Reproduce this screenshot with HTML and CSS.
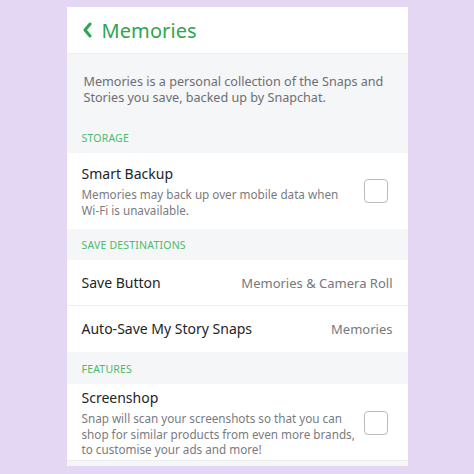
FILE: index.html
```html
<!DOCTYPE html>
<html>
<head>
<meta charset="utf-8">
<link rel="stylesheet" href="styles.css">
</head>
<body>
<div class="card">
  <div class="header">
    <svg class="back" width="10" height="16" viewBox="0 0 10 16"><path d="M8 2 L3 8 L8 14" fill="none" stroke="#2ea552" stroke-width="3" stroke-linecap="round" stroke-linejoin="round"/></svg>
    <span class="title">Memories</span>
  </div>
  <div class="intro">Memories is a personal collection of the Snaps and Stories you save, backed up by Snapchat.</div>
  <div class="section">STORAGE</div>
  <div class="row tall">
    <div class="text">
      <div class="label">Smart Backup</div>
      <div class="sub">Memories may back up over mobile data when <span class="nw">Wi-Fi</span> is unavailable.</div>
    </div>
    <div class="check"></div>
  </div>
  <div class="section s2">SAVE DESTINATIONS</div>
  <div class="row line">
    <div class="label">Save Button</div>
    <div class="value">Memories &amp; Camera Roll</div>
  </div>
  <div class="row">
    <div class="label">Auto-Save My Story Snaps</div>
    <div class="value">Memories</div>
  </div>
  <div class="section s3">FEATURES</div>
  <div class="row tall last">
    <div class="text">
      <div class="label">Screenshop</div>
      <div class="sub">Snap will scan your screenshots so that you can shop for similar products from even more brands, to customise your ads and more!</div>
    </div>
    <div class="check"></div>
  </div>
  <div class="foot"></div>
</div>
</body>
</html>
```
FILE: styles.css
```css
* { box-sizing: border-box; }
html, body { margin: 0; padding: 0; }
body {
  background: #e4d7f4;
  width: 474px;
  height: 474px;
  overflow: hidden;
  display: flex;
  justify-content: center;
  padding-top: 7px;
  font-family: "Noto Sans", "Open Sans", sans-serif;
}
.card {
  width: 341px;
  height: 459px;
  background: #f5f6f8;
  display: flex;
  flex-direction: column;
}
.header {
  height: 47px;
  flex: none;
  background: #fff;
  display: flex;
  align-items: center;
  padding-left: 15px;
  gap: 10px;
  border-bottom: 1px solid #eceef0;
}
.title {
  color: #2ea552;
  font-size: 20px;
  letter-spacing: 0.1px;
}
.intro {
  flex: none;
  padding: 20px 15px 0 17px;
  height: 69px;
  font-size: 12.6px;
  line-height: 16px;
  color: #6c6e73;
}
.section {
  flex: none;
  height: 30px;
  padding-left: 15px;
  display: flex;
  align-items: center;
  font-size: 10.5px;
  color: #4dba6a;
  letter-spacing: 0.2px;
}
.section.s2 { height: 31px; }
.section.s3 { height: 32px; padding-top: 2px; }
.row {
  flex: none;
  background: #fff;
  height: 46px;
  display: flex;
  align-items: center;
  justify-content: space-between;
  padding: 0 15px;
}
.row.line { border-bottom: 1px solid #eceef0; }
.row.tall { height: 76px; padding-right: 20px; }
.row.last { height: 77px; border-bottom: 1px solid #eceef0; padding-top: 2px; }
.text { display: flex; flex-direction: column; }
.label {
  font-size: 14px;
  line-height: 20px;
  color: #222428;
}
.tall .label { margin-bottom: 3px; }
.sub {
  font-size: 11.7px;
  line-height: 15.5px;
  color: #797b80;
  width: 279px;
}
.nw { white-space: nowrap; }
.value {
  font-size: 13px;
  color: #76787d;
}
.check {
  width: 24px;
  height: 24px;
  border: 1.5px solid #b9bbbf;
  border-radius: 4px;
  flex: none;
}
.foot { flex: 1; }
```
